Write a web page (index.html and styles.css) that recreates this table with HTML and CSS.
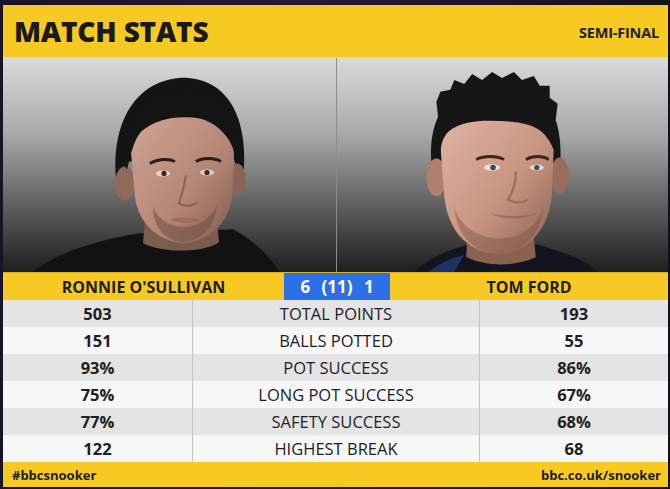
FILE: index.html
```html
<!DOCTYPE html>
<html lang="en">
<head>
<meta charset="utf-8">
<title>Match Stats</title>
<link rel="stylesheet" href="styles.css">
</head>
<body>
<div class="panel">
  <header class="head">
    <h1 class="title">MATCH STATS</h1>
    <span class="round">SEMI-FINAL</span>
  </header>

  <div class="photos">
    <div class="photo">
      <svg class="portrait" viewBox="0 0 333 215" preserveAspectRatio="none">
        <defs>
          <linearGradient id="skinA" x1="0" y1="0" x2="1" y2="1">
            <stop offset="0" stop-color="#cfa595"/>
            <stop offset="0.6" stop-color="#b48574"/>
            <stop offset="1" stop-color="#7d5a4e"/>
          </linearGradient>
        </defs>
        <path d="M30,215 C55,194 100,182 136,176 L230,172 C252,184 268,200 276,215 Z" fill="#121212"/>
        <path d="M143,150 L213,150 L216,185 C200,196 160,196 140,186 Z" fill="#7d5c50"/>
        <path d="M114,128 C106,70 130,24 176,20 C222,18 248,56 240,126 L230,100 L126,104 Z" fill="#141414"/>
        <ellipse cx="122" cy="126" rx="10" ry="17" fill="#8f6a5c"/>
        <ellipse cx="234" cy="122" rx="9" ry="16" fill="#8a6557"/>
        <path d="M128,95 C128,72 150,58 178,58 C208,58 231,72 231,98 L229,140 C225,168 205,184 180,186 C156,184 136,168 132,140 Z" fill="url(#skinA)"/>
        <path d="M118,104 C116,52 150,30 182,30 C220,30 244,55 238,108 L232,96 C226,76 210,62 192,60 C170,58 152,62 138,74 C130,84 128,96 124,112 Z" fill="#141414"/>
        <path d="M147,106 C155,101 166,101 172,104" stroke="#2a1c18" stroke-width="3" fill="none"/>
        <path d="M193,104 C200,100 211,100 218,104" stroke="#2a1c18" stroke-width="3" fill="none"/>
        <ellipse cx="160" cy="116" rx="7" ry="3" fill="#e8d8d2"/>
        <circle cx="161" cy="116" r="2.6" fill="#3a2822"/>
        <ellipse cx="204" cy="115" rx="7" ry="3" fill="#e0cfc8"/>
        <circle cx="204" cy="115" r="2.6" fill="#3a2822"/>
        <path d="M183,118 C181,132 178,140 176,146 C182,150 190,149 194,145" stroke="#8a6254" stroke-width="2" fill="none"/>
        <path d="M150,150 C160,175 200,178 214,148 C212,170 198,184 180,185 C162,184 150,170 150,150 Z" fill="#6e5046" opacity="0.55"/>
        <path d="M168,162 C176,160 190,160 198,162 C190,167 176,167 168,162 Z" fill="#9e6a62"/>
      </svg>
    </div>
    <div class="photo">
      <svg class="portrait" viewBox="0 0 333 215" preserveAspectRatio="none">
        <defs>
          <linearGradient id="skinB" x1="0" y1="0" x2="1" y2="1">
            <stop offset="0" stop-color="#e0b4a4"/>
            <stop offset="0.55" stop-color="#c99582"/>
            <stop offset="1" stop-color="#8a6050"/>
          </linearGradient>
        </defs>
        <path d="M78,215 C95,198 120,190 138,186 L196,186 C220,192 250,202 262,215 Z" fill="#121520"/>
        <path d="M92,215 C105,205 118,200 128,198 L118,215 Z" fill="#1e3266"/>
        <path d="M132,160 L196,160 L200,200 C180,210 150,210 130,200 Z" fill="#8a6252"/>
        <path d="M96,112 C88,64 112,24 160,20 C206,20 230,54 224,114 Z" fill="#161616"/>
        <path d="M104,34 L114,32 L118,22 L128,26 L136,16 L146,22 L156,14 L166,20 L178,14 L186,22 L198,18 L204,28 L214,28 L214,40 L222,46 L220,62 L102,62 L100,44 Z" fill="#161616"/>
        <ellipse cx="100" cy="120" rx="10" ry="19" fill="#b0806e"/>
        <ellipse cx="224" cy="118" rx="9" ry="18" fill="#9a6c5c"/>
        <path d="M104,88 C104,70 122,60 160,58 C196,58 218,70 218,92 L216,140 C212,175 190,196 162,197 C134,196 112,176 108,140 Z" fill="url(#skinB)"/>
        <path d="M100,96 C98,62 120,44 160,44 C196,44 222,58 220,96 L214,84 C206,70 194,66 176,64 C150,62 126,62 112,74 C106,80 104,88 104,100 Z" fill="#161616"/>
        <path d="M140,102 C148,98 160,98 168,102" stroke="#3a2620" stroke-width="3" fill="none"/>
        <path d="M190,102 C197,98 207,98 213,102" stroke="#3a2620" stroke-width="3" fill="none"/>
        <ellipse cx="156" cy="110" rx="8" ry="3.2" fill="#ece0dc"/>
        <circle cx="157" cy="110" r="2.8" fill="#3c4a5a"/>
        <ellipse cx="201" cy="110" rx="7" ry="3" fill="#e6d8d2"/>
        <circle cx="201" cy="110" r="2.6" fill="#3c4a5a"/>
        <path d="M180,114 C180,126 176,136 172,142 C178,146 188,146 192,142" stroke="#9a6a58" stroke-width="2" fill="none"/>
        <path d="M118,150 C130,190 196,194 208,148 C206,176 188,196 162,197 C136,196 120,176 118,150 Z" fill="#7a5448" opacity="0.45"/>
        <path d="M154,156 C166,160 190,160 204,155 C194,162 168,164 154,156 Z" fill="#a06a60"/>
      </svg>
    </div>
  </div>

  <div class="names">
    <div class="name">RONNIE O'SULLIVAN</div>
    <div class="score">6 (11) 1</div>
    <div class="name">TOM FORD</div>
  </div>

  <div class="stats">
    <div class="row">
      <div class="val">503</div><div class="label">TOTAL POINTS</div><div class="val">193</div>
    </div>
    <div class="row">
      <div class="val">151</div><div class="label">BALLS POTTED</div><div class="val">55</div>
    </div>
    <div class="row">
      <div class="val">93%</div><div class="label">POT SUCCESS</div><div class="val">86%</div>
    </div>
    <div class="row">
      <div class="val">75%</div><div class="label">LONG POT SUCCESS</div><div class="val">67%</div>
    </div>
    <div class="row">
      <div class="val">77%</div><div class="label">SAFETY SUCCESS</div><div class="val">68%</div>
    </div>
    <div class="row">
      <div class="val">122</div><div class="label">HIGHEST BREAK</div><div class="val">68</div>
    </div>
  </div>

  <footer class="foot">
    <span>#bbcsnooker</span>
    <span>bbc.co.uk/snooker</span>
  </footer>
</div>
</body>
</html>
```

FILE: styles.css
```css
html, body {
  margin: 0;
  padding: 0;
}

body {
  background: linear-gradient(90deg, #1a1228 0%, #2a1838 45%, #141018 100%);
  font-family: "Open Sans", "Liberation Sans", sans-serif;
  color: #1c1c1c;
  width: 670px;
  height: 489px;
  overflow: hidden;
}

.panel {
  margin: 5px 2px 2px 3px;
  width: 665px;
  height: 482px;
  display: flex;
  flex-direction: column;
}

.head {
  height: 52px;
  background: #f6ca22;
  display: flex;
  align-items: center;
  justify-content: space-between;
  padding: 0 9px 0 11px;
  box-sizing: border-box;
}

.title {
  margin: 0;
  font-size: 28px;
  font-weight: 800;
  letter-spacing: -0.2px;
  color: #1a1a1a;
}

.round {
  font-size: 14.5px;
  font-weight: 700;
  color: #222;
  padding-top: 3px;
  letter-spacing: -0.2px;
}

.photos {
  height: 215px;
  display: grid;
  grid-template-columns: 333px 332px;
  border-top: 1px solid #e4d8a8;
  box-sizing: border-box;
}

.photo {
  background: linear-gradient(180deg, #dadada 0%, #aaaaaa 35%, #5c5c5c 70%, #1e1e1e 100%);
  overflow: hidden;
}

.photo + .photo {
  border-left: 1px solid #8c8c8c;
}

.portrait {
  display: block;
  width: 100%;
  height: 100%;
}

.names {
  height: 28px;
  display: grid;
  grid-template-columns: 281px 106px 278px;
  background: #f6ca22;
  border-top: 1px solid #d9b21a;
  box-sizing: border-box;
}

.name {
  display: flex;
  align-items: center;
  justify-content: center;
  font-size: 16px;
  font-weight: 700;
  color: #1e1e1e;
  letter-spacing: 0;
}

.score {
  display: flex;
  align-items: center;
  justify-content: center;
  background: #2c6fe6;
  color: #ffffff;
  font-size: 17px;
  font-weight: 700;
  word-spacing: 7px;
}

.stats {
  display: flex;
  flex-direction: column;
}

.row {
  height: 27px;
  display: grid;
  grid-template-columns: 189px 288px 188px;
  background: #f7f7f7;
}

.row:nth-child(odd) {
  background: #e4e4e4;
}

.row > div {
  display: flex;
  align-items: center;
  justify-content: center;
}

.val {
  font-size: 16.5px;
  font-weight: 700;
  color: #202020;
}

.label {
  font-size: 16.5px;
  font-weight: 400;
  color: #1e1e1e;
  border-left: 1px solid #c4c4c4;
  border-right: 1px solid #c4c4c4;
}

.foot {
  height: 25px;
  background: #f6ca22;
  display: flex;
  align-items: center;
  justify-content: space-between;
  padding: 0 7px 0 9px;
  font-size: 13px;
  font-weight: 700;
  color: #1e1e1e;
  box-sizing: border-box;
}
```
